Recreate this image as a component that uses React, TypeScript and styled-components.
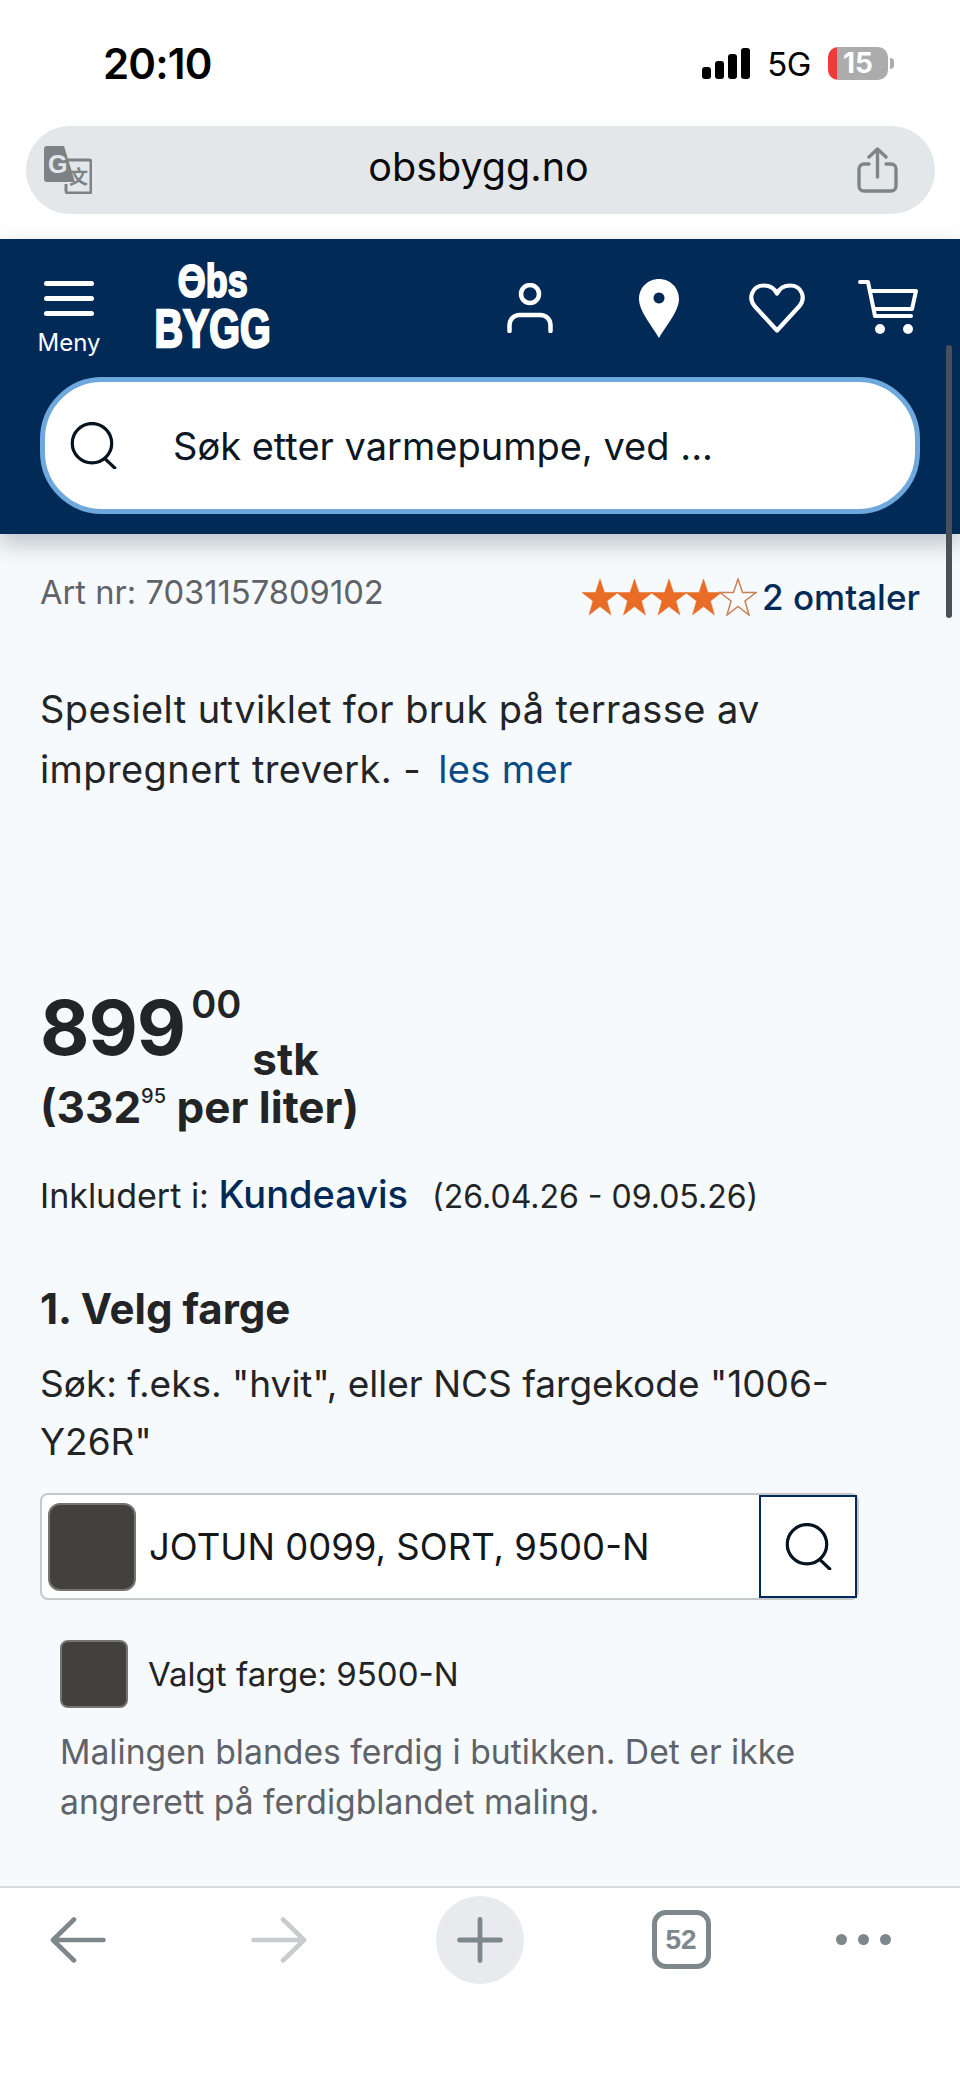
import styled, { createGlobalStyle } from "styled-components";

const GlobalStyle = createGlobalStyle`
  * { box-sizing: border-box; }
  html, body { margin: 0; padding: 0; background: #ffffff; }
  body { font-family: "Inter", "Liberation Sans", sans-serif; }
`;

const Star = ({ x, filled }: { x: number; filled: boolean }) => (
  <polygon
    transform={`translate(${x} 0)`}
    points="19,1 23.5,14.5 37,14.5 26,23 30,37 19,28.5 8,37 12,23 1,14.5 14.5,14.5"
    fill={filled ? "#e96c26" : "#f9fbfc"}
    stroke={filled ? "#e96c26" : "#c98256"}
    strokeWidth={filled ? 0.5 : 1.5}
  />
);

const SearchIcon = ({ size }: { size: number }) => (
  <svg width={size} height={size * 0.97} viewBox="0 0 48 47" fill="none" stroke="#05141f" strokeWidth="3.2" strokeLinecap="round">
    <circle cx="22.5" cy="21" r="19.5" />
    <path d="M35 36 L45 45.5" />
  </svg>
);

const App = () => {
  return (
    <>
      <GlobalStyle />
      <Page>
        <TopChrome>
          <StatusBar>
            <Clock>20:10</Clock>
            <StatusIcons>
              <svg width="48" height="31" viewBox="0 0 48 31" fill="#000">
                <rect x="0" y="19" width="9" height="12" rx="3" />
                <rect x="13" y="13" width="9" height="18" rx="3" />
                <rect x="26" y="6" width="9" height="25" rx="3" />
                <rect x="39" y="0" width="9" height="31" rx="3" />
              </svg>
              <Network>5G</Network>
              <Battery>
                <BatteryLevel>15</BatteryLevel>
                <BatteryNub />
              </Battery>
            </StatusIcons>
          </StatusBar>
          <UrlBar>
            <svg width="48" height="48" viewBox="0 0 48 48">
              <path d="M20 14 H45 a2 2 0 0 1 2 2 V45 a2 2 0 0 1 -2 2 H24 a2 2 0 0 1 -2 -2 V38" fill="#e4e7ea" stroke="#7d8285" strokeWidth="3" />
              <path d="M3 0 H20 L31 36 H3 a3 3 0 0 1 -3 -3 V3 a3 3 0 0 1 3 -3 Z" fill="#7d8285" />
              <text x="4" y="27" fontFamily="Liberation Sans, sans-serif" fontWeight="700" fontSize="25" fill="#e4e7ea">G</text>
              <text x="25" y="38" fontFamily="Noto Sans CJK SC, sans-serif" fontWeight="700" fontSize="19" fill="#7d8285">文</text>
            </svg>
            <UrlText>obsbygg.no</UrlText>
            <svg width="41" height="46" viewBox="0 0 41 46" fill="none" stroke="#7d8589" strokeWidth="3.4" strokeLinecap="round" strokeLinejoin="round">
              <path d="M12 17 H7 a5 5 0 0 0 -5 5 V39 a5 5 0 0 0 5 5 H34 a5 5 0 0 0 5 -5 V22 a5 5 0 0 0 -5 -5 H29" />
              <path d="M20.500 30 V2 M12 10 L20.500 2 L29 10" />
            </svg>
          </UrlBar>
        </TopChrome>

        <SiteHeader>
          <HeaderRow>
            <MenuButton>
              <BurgerLine />
              <BurgerLine />
              <BurgerLine />
              <MenuLabel>Meny</MenuLabel>
            </MenuButton>
            <Logo>
              <LogoTop>
                <LogoO>O</LogoO>bs
              </LogoTop>
              <LogoBottom>BYGG</LogoBottom>
            </Logo>
            <HeaderIcons>
              <svg width="46" height="50" viewBox="0 0 46 50" fill="none" stroke="#fff" strokeWidth="4.500" strokeLinecap="round">
                <circle cx="23" cy="11" r="9" />
                <path d="M2.500 48 V42 a10 10 0 0 1 10 -10 H33.500 a10 10 0 0 1 10 10 V48" />
              </svg>
              <svg width="40" height="59" viewBox="0 0 40 59">
                <path fillRule="evenodd" fill="#fff" d="M20 0 C31 0 40 8.500 40 20 C40 32 27 47 20 59 C13 47 0 32 0 20 C0 8.500 9 0 20 0 Z M20 13.500 a5.500 5.500 0 1 0 0.010 0 Z" />
              </svg>
              <svg width="56" height="50" viewBox="0 0 56 50" fill="none" stroke="#fff" strokeWidth="4.200" strokeLinejoin="round">
                <path d="M28 47.500 L5.500 23 C-1 15 3 2.500 15 2.500 C21 2.500 25.500 5.500 28 10.500 C30.500 5.500 35 2.500 41 2.500 C53 2.500 57 15 50.500 23 Z" />
              </svg>
              <svg width="60" height="56" viewBox="0 0 60 56" fill="none" stroke="#fff" strokeWidth="4" strokeLinecap="round" strokeLinejoin="round">
                <path d="M2 2 H10 L17 36 H53" />
                <path d="M12 11 H58 L54 29 H16" />
                <circle cx="22" cy="49" r="5" fill="#fff" stroke="none" />
                <circle cx="50" cy="49" r="5" fill="#fff" stroke="none" />
              </svg>
            </HeaderIcons>
          </HeaderRow>
          <SearchPill>
            <SearchIcon size={49} />
            <SearchPlaceholder>Søk etter varmepumpe, ved ...</SearchPlaceholder>
          </SearchPill>
        </SiteHeader>

        <Content>
          <MetaRow>
            <ArtNumber>Art nr: 7031157809102</ArtNumber>
            <Rating>
              <svg width="176" height="38" viewBox="0 0 176 38">
                {[0, 1, 2, 3, 4].map((i) => (
                  <Star key={i} x={i * 34.5} filled={i < 4} />
                ))}
              </svg>
              <RatingText>2 omtaler</RatingText>
            </Rating>
          </MetaRow>

          <Description>
            Spesielt utviklet for bruk på terrasse av impregnert treverk. - <ReadMore>les mer</ReadMore>
          </Description>

          <PriceRow>
            <PriceMain>899</PriceMain>
            <PriceCents>00</PriceCents>
            <PriceUnit>stk</PriceUnit>
          </PriceRow>
          <UnitPrice>
            (332<UnitCents>95</UnitCents> per liter)
          </UnitPrice>

          <Included>
            Inkludert i: <IncludedLink>Kundeavis</IncludedLink>
            <IncludedDate>(26.04.26 - 09.05.26)</IncludedDate>
          </Included>

          <SectionTitle>1. Velg farge</SectionTitle>
          <SearchHint>Søk: f.eks. "hvit", eller NCS fargekode "1006-Y26R"</SearchHint>

          <ColorInput>
            <Swatch $large />
            <ColorValue>JOTUN 0099, SORT, 9500-N</ColorValue>
            <ColorSearchButton>
              <SearchIcon size={49} />
            </ColorSearchButton>
          </ColorInput>

          <SelectedRow>
            <Swatch />
            <SelectedText>Valgt farge: 9500-N</SelectedText>
          </SelectedRow>

          <Notice>Malingen blandes ferdig i butikken. Det er ikke angrerett på ferdigblandet maling.</Notice>
        </Content>

        <BottomBar>
          <svg width="56" height="46" viewBox="0 0 56 46" fill="none" stroke="#7e878c" strokeWidth="4.600" strokeLinecap="round" strokeLinejoin="round">
            <path d="M53.500 23 H3 M24 2.500 L3 23 L24 43.500" />
          </svg>
          <svg width="56" height="46" viewBox="0 0 56 46" fill="none" stroke="#c9cbcc" strokeWidth="4.600" strokeLinecap="round" strokeLinejoin="round">
            <path d="M2.500 23 H53 M32 2.500 L53 23 L32 43.500" />
          </svg>
          <NewTabButton>
            <svg width="46" height="46" viewBox="0 0 46 46" fill="none" stroke="#7e878c" strokeWidth="4.800" strokeLinecap="round">
              <path d="M23 2.500 V43.500 M2.500 23 H43.500" />
            </svg>
          </NewTabButton>
          <TabCount>52</TabCount>
          <MoreDots>
            <Dot />
            <Dot />
            <Dot />
          </MoreDots>
        </BottomBar>

        <ScrollThumb />
      </Page>
    </>
  );
};

export default App;

const Page = styled.div`
  position: relative;
  width: 960px;
  height: 2078px;
  display: flex;
  flex-direction: column;
  overflow: hidden;
  background: #f6fafc;
`;

const TopChrome = styled.div`
  height: 239px;
  background: #ffffff;
  padding: 47px 25px 0 26px;
`;

const StatusBar = styled.div`
  display: flex;
  justify-content: space-between;
  align-items: center;
  height: 33px;
  padding: 0 41px 0 77px;
`;

const Clock = styled.div`
  font-size: 42px;
  font-weight: 600;
  letter-spacing: -0.8px;
  color: #000000;
`;

const StatusIcons = styled.div`
  display: flex;
  align-items: center;
`;

const Network = styled.div`
  margin: 0 17px;
  font-size: 33px;
  color: #000000;
  letter-spacing: -0.5px;
`;

const Battery = styled.div`
  display: flex;
  align-items: center;
`;

const BatteryLevel = styled.div`
  width: 60px;
  height: 33px;
  border-radius: 10px;
  background: linear-gradient(to right, #ee3b3f 0 9px, #acacac 9px);
  color: #ffffff;
  font-size: 28px;
  font-weight: 700;
  line-height: 33px;
  text-align: center;
`;

const BatteryNub = styled.div`
  width: 4px;
  height: 11px;
  margin-left: 2px;
  border-radius: 0 6px 6px 0;
  background: #acacac;
`;

const UrlBar = styled.div`
  display: flex;
  align-items: center;
  justify-content: space-between;
  height: 88px;
  margin-top: 46px;
  padding: 0 37px 0 18px;
  border-radius: 44px;
  background: #e4e7ea;
`;

const UrlText = styled.div`
  margin: 0 0 6px 8px;
  font-size: 39.5px;
  color: #0a0a0a;
`;

const SiteHeader = styled.header`
  position: relative;
  z-index: 1;
  height: 295px;
  padding: 26px 40px 0;
  background: #012a57;
  box-shadow: 0 10px 22px rgba(40, 50, 60, 0.28);
`;

const HeaderRow = styled.div`
  display: flex;
  align-items: flex-start;
  height: 112px;
`;

const MenuButton = styled.div`
  position: relative;
  width: 62px;
  margin-left: -2px;
  display: flex;
  flex-direction: column;
  align-items: center;
  gap: 10px;
  padding-top: 16px;
`;

const BurgerLine = styled.div`
  width: 50px;
  height: 5px;
  border-radius: 3px;
  background: #ffffff;
`;

const MenuLabel = styled.div`
  margin-top: 2px;
  font-size: 24px;
  line-height: 29px;
  color: #ffffff;
`;

const Logo = styled.div`
  display: flex;
  flex-direction: column;
  align-items: center;
  width: 114px;
  margin: -7px 0 0 56px;
  color: #ffffff;
  font-family: "Liberation Sans", sans-serif;
  font-weight: 700;
`;

const LogoTop = styled.div`
  height: 45px;
  font-size: 46px;
  line-height: 46px;
  transform: scaleX(0.78);
  -webkit-text-stroke: 2px #ffffff;
`;

const LogoO = styled.span`
  position: relative;
  &::after {
    content: "";
    position: absolute;
    left: 6px;
    right: 6px;
    top: 21px;
    height: 5px;
    background: #ffffff;
  }
`;

const LogoBottom = styled.div`
  font-size: 54px;
  line-height: 50px;
  white-space: nowrap;
  transform: scaleX(0.73);
  -webkit-text-stroke: 2.5px #ffffff;
`;

const HeaderIcons = styled.div`
  display: flex;
  align-items: center;
  height: 62px;
  margin: 12px 2px 0 auto;
  & > svg:nth-child(2) { margin-left: 86px; }
  & > svg:nth-child(3) { margin-left: 70px; }
  & > svg:nth-child(4) { margin-left: 53px; }
`;

const SearchPill = styled.div`
  display: flex;
  align-items: center;
  gap: 55px;
  height: 137px;
  padding: 0 24px;
  border: 5px solid #6fa8dc;
  border-radius: 62px;
  background: #ffffff;
`;

const SearchPlaceholder = styled.div`
  font-size: 38px;
  color: #0b1722;
`;

const Content = styled.main`
  flex: 1;
  padding: 36px 40px 0;
`;

const MetaRow = styled.div`
  display: flex;
  justify-content: space-between;
  align-items: flex-start;
  height: 50px;
`;

const ArtNumber = styled.div`
  font-size: 32.7px;
  line-height: 44px;
  color: #5f6368;
`;

const Rating = styled.div`
  display: flex;
  align-items: center;
  gap: 5px;
  margin-top: 6px;
`;

const RatingText = styled.div`
  font-size: 35px;
  line-height: 42px;
  font-weight: 500;
  color: #012a57;
`;

const Description = styled.p`
  width: 780px;
  margin: 59px 0 0;
  font-size: 38px;
  letter-spacing: 0.4px;
  line-height: 60px;
  color: #222426;
`;

const ReadMore = styled.span`
  margin-left: 6px;
  color: #0a4a86;
`;

const PriceRow = styled.div`
  display: flex;
  align-items: flex-start;
  height: 101px;
  margin-top: 182px;
  color: #222426;
  font-weight: 700;
`;

const PriceMain = styled.div`
  font-size: 76px;
  line-height: 92px;
  letter-spacing: -1px;
`;

const PriceCents = styled.div`
  margin: -2px 0 0 6px;
  font-size: 38px;
  line-height: 50px;
  font-weight: 600;
`;

const PriceUnit = styled.div`
  margin: 53px 0 0 11px;
  font-size: 44px;
  line-height: 50px;
`;

const UnitPrice = styled.div`
  font-size: 44px;
  line-height: 50px;
  font-weight: 700;
  color: #222426;
`;

const UnitCents = styled.sup`
  font-size: 20px;
  font-weight: 500;
  line-height: 0;
  vertical-align: 20px;
`;

const Included = styled.div`
  margin-top: 37px;
  font-size: 34px;
  line-height: 50px;
  color: #222426;
`;

const IncludedLink = styled.span`
  font-size: 38px;
  font-weight: 500;
  color: #012a57;
`;

const IncludedDate = styled.span`
  margin-left: 24px;
  font-size: 32px;
`;

const SectionTitle = styled.h2`
  margin: 57px 0 0;
  font-size: 42px;
  line-height: 60px;
  font-weight: 700;
  color: #222426;
`;

const SearchHint = styled.p`
  width: 830px;
  margin: 16px 0 0;
  font-size: 37px;
  line-height: 58px;
  color: #222426;
`;

const ColorInput = styled.div`
  display: flex;
  align-items: center;
  width: 819px;
  height: 107px;
  margin-top: 22px;
  padding-left: 6px;
  border: 2px solid #c6c9cc;
  border-radius: 8px;
  background: #ffffff;
`;

const Swatch = styled.div<{ $large?: boolean }>`
  flex: none;
  width: ${({ $large }) => ($large ? "88px" : "68px")};
  height: ${({ $large }) => ($large ? "88px" : "68px")};
  border: 2px solid #757470;
  border-radius: ${({ $large }) => ($large ? "12px" : "8px")};
  background: #43413d;
`;

const ColorValue = styled.div`
  flex: 1;
  margin-left: 13px;
  font-size: 36.5px;
  color: #15171a;
`;

const ColorSearchButton = styled.div`
  display: flex;
  align-items: center;
  justify-content: center;
  width: 98px;
  height: 103px;
  border: 2.5px solid #012a57;
  background: #ffffff;
`;

const SelectedRow = styled.div`
  display: flex;
  align-items: center;
  gap: 20px;
  margin: 40px 0 0 20px;
`;

const SelectedText = styled.div`
  font-size: 33px;
  color: #222426;
`;

const Notice = styled.p`
  width: 800px;
  margin: 19px 0 0 20px;
  font-size: 33.7px;
  line-height: 50px;
  color: #5f6368;
`;

const BottomBar = styled.footer`
  display: grid;
  grid-template-columns: repeat(5, 201px);
  justify-content: center;
  justify-items: center;
  align-items: start;
  height: 192px;
  padding-top: 8px;
  border-top: 2px solid #dcd9dc;
  background: #ffffff;
  & > svg {
    margin-top: 21px;
  }
`;

const NewTabButton = styled.div`
  display: flex;
  align-items: center;
  justify-content: center;
  width: 88px;
  height: 88px;
  border-radius: 50%;
  background: #e8eaed;
`;

const TabCount = styled.div`
  width: 59px;
  height: 59px;
  margin-top: 14px;
  border: 5px solid #7e878c;
  border-radius: 14px;
  color: #7e878c;
  font-family: "Liberation Sans", sans-serif;
  font-size: 28px;
  font-weight: 700;
  line-height: 49px;
  text-align: center;
`;

const MoreDots = styled.div`
  display: flex;
  gap: 11px;
  margin: 38px 38px 0 0;
`;

const Dot = styled.div`
  width: 11px;
  height: 11px;
  border-radius: 50%;
  background: #7e878c;
`;

const ScrollThumb = styled.div`
  position: absolute;
  z-index: 2;
  top: 345px;
  left: 946px;
  width: 6px;
  height: 273px;
  border-radius: 3px;
  background: #4a5058;
`;
